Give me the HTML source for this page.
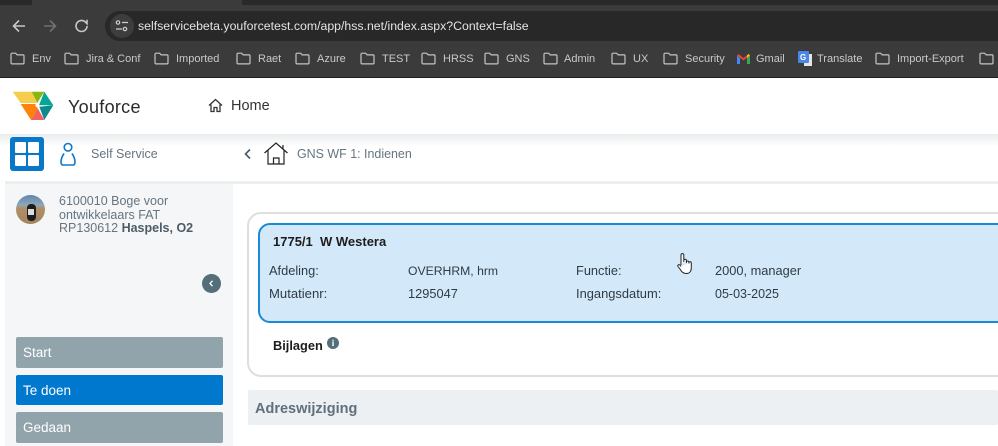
<!DOCTYPE html>
<html><head><meta charset="utf-8"><style>
html,body{margin:0;padding:0;background:#fff}
#p{position:relative;width:998px;height:446px;overflow:hidden;background:#fff;font-family:"Liberation Sans",sans-serif}
#p div,#p svg,#p span.t{position:absolute}
.t{white-space:nowrap;line-height:16px}
.b{font-size:11px;color:#c9c9c9;top:51px}
.f{top:52px;width:15px;height:13px}
.l{font-size:12.800px;color:#2f3b44}
.nav{left:16px;width:207px;height:31px;border-radius:2px;background:#91a3ab;color:#fff;font-size:13.500px;line-height:31px;text-indent:7px}
</style></head><body><div id="p">
<svg width="0" height="0"><defs><symbol id="fo" viewBox="0 0 15 13"><path d="M1 2.200a1 1 0 0 1 1-1h3.600l1.600 1.700H13a1 1 0 0 1 1 1v7a1 1 0 0 1-1 1H2a1 1 0 0 1-1-1z" fill="none" stroke="#c4c4c4" stroke-width="1.200"/></symbol></defs></svg>

<div style="left:0;top:0;width:998px;height:78px;background:#3b3b3b"></div>
<div style="left:0;top:0;width:998px;height:5px;background:#292929"></div>
<div style="left:32px;top:0;width:210px;height:5px;background:#3b3b3b"></div>
<div style="left:105px;top:11px;width:893px;height:30px;background:#282828;border-radius:15px 0 0 15px"></div>
<div style="left:110px;top:14px;width:24px;height:24px;border-radius:12px;background:#3d3d3d"></div>
<div style="left:0;top:77px;width:998px;height:1px;background:#1f1f1f"></div>

<svg style="left:10px;top:16px" width="18" height="20" viewBox="0 0 18 20"><path d="M15 10H3.500M9 4.500 3.500 10 9 15.500" fill="none" stroke="#c7c7c7" stroke-width="1.600"/></svg>
<svg style="left:41px;top:16px" width="18" height="20" viewBox="0 0 18 20"><path d="M3 10h11.500M9 4.500l5.500 5.500L9 15.500" fill="none" stroke="#707070" stroke-width="1.600"/></svg>
<svg style="left:73px;top:16px" width="18" height="20" viewBox="0 0 18 20"><path d="M14 10a5.500 5.500 0 1 1-1.600-3.900L14 7.700V3.800" fill="none" stroke="#c7c7c7" stroke-width="1.600"/></svg>
<svg style="left:114px;top:19px" width="16" height="14" viewBox="0 0 16 14"><g fill="none" stroke="#d0d0d0" stroke-width="1.200"><circle cx="4" cy="3.500" r="1.700"/><circle cx="11" cy="10" r="1.700"/><path d="M8 3.500h6M2 10h6"/></g></svg>
<span class="t" style="left:138px;top:18px;font-size:12.300px;color:#e3e3e3">selfservicebeta.youforcetest.com/app/hss.net/index.aspx?Context=false</span>

<svg class="f" style="left:10px" ><use href="#fo"/></svg><span class="t b" style="left:32px">Env</span>
<svg class="f" style="left:64px"><use href="#fo"/></svg><span class="t b" style="left:86px">Jira &amp; Conf</span>
<svg class="f" style="left:154px"><use href="#fo"/></svg><span class="t b" style="left:176px">Imported</span>
<svg class="f" style="left:236px"><use href="#fo"/></svg><span class="t b" style="left:258px">Raet</span>
<svg class="f" style="left:295px"><use href="#fo"/></svg><span class="t b" style="left:317px">Azure</span>
<svg class="f" style="left:360px"><use href="#fo"/></svg><span class="t b" style="left:382px">TEST</span>
<svg class="f" style="left:421px"><use href="#fo"/></svg><span class="t b" style="left:443px">HRSS</span>
<svg class="f" style="left:484px"><use href="#fo"/></svg><span class="t b" style="left:506px">GNS</span>
<svg class="f" style="left:543px"><use href="#fo"/></svg><span class="t b" style="left:564px">Admin</span>
<svg class="f" style="left:611px"><use href="#fo"/></svg><span class="t b" style="left:633px">UX</span>
<svg class="f" style="left:663px"><use href="#fo"/></svg><span class="t b" style="left:685px">Security</span>
<svg style="left:737px;top:54px" width="13" height="10" viewBox="0 0 13 10"><path d="M0 1.500V10h3V4z" fill="#4285f4"/><path d="M13 1.500V10h-3V4z" fill="#34a853"/><path d="M0 1.500 1.500 0l5 4 5-4L13 1.500 6.500 6.500z" fill="#ea4335"/><path d="M11.500 0 13 1.500 10 4V1.200z" fill="#fbbc04"/></svg>
<span class="t b" style="left:756px">Gmail</span>
<div style="left:804px;top:54px;width:8px;height:12px;background:#e4e4e4"></div>
<div style="left:798px;top:51px;width:11px;height:12px;background:#4a86e8;border-radius:1px"></div>
<span class="t" style="left:800px;top:50px;font-size:8px;color:#fff;font-weight:bold">G</span>
<span class="t b" style="left:817px">Translate</span>
<svg class="f" style="left:875px"><use href="#fo"/></svg><span class="t b" style="left:897px">Import-Export</span>
<svg class="f" style="left:979px"><use href="#fo"/></svg>

<svg style="left:12px;top:91px" width="42" height="30" viewBox="0 0 42 30"><path d="M.7.700H19.700L25.500 12H8.700z" fill="#f6cd4c"/><path d="M19.700.700H32.300L25.300 11.700z" fill="#8db510"/><path d="M32.300.700 41.300 14.300H27z" fill="#05a598"/><path d="M41.300 14.300 32.300 29 27.300 15.700z" fill="#0d8a8c"/><path d="M32.300 29H19L25.700 17.300z" fill="#f2625a"/><path d="M19 29 8.700 13H23.700L25.700 17.300z" fill="#ff8209"/><circle cx="25.300" cy="14.300" r="1.900" fill="#fff"/></svg>
<span class="t" style="left:68px;top:97px;font-size:18px;line-height:20px;color:#2b2b2b;letter-spacing:.3px">Youforce</span>
<svg style="left:208px;top:98px" width="15" height="15" viewBox="0 0 15 15"><path d="M1 7.500 7.500 1.500 14 7.500M3 6.500V13.500H6V9.500H9V13.500H12V6.500" fill="none" stroke="#333" stroke-width="1.300"/></svg>
<span class="t" style="left:231px;top:98px;font-size:14.500px;color:#333">Home</span>

<div style="left:0;top:134px;width:998px;height:12px;background:linear-gradient(#e9ebed,#fff)"></div>
<div style="left:10px;top:137px;width:34px;height:34px;border-radius:3px;background:#0a78c9"></div>
<div style="left:15px;top:142px;width:11px;height:11px;background:#fff;border-radius:1px"></div>
<div style="left:28px;top:142px;width:11px;height:11px;background:#fff;border-radius:1px"></div>
<div style="left:15px;top:155px;width:11px;height:11px;background:#fff;border-radius:1px"></div>
<div style="left:28px;top:155px;width:11px;height:11px;background:#fff;border-radius:1px"></div>
<svg style="left:59px;top:142px" width="18" height="25" viewBox="0 0 18 25"><g fill="none" stroke="#1078c8" stroke-width="1.600"><circle cx="9" cy="5.300" r="3.800"/><path d="M5 11.500Q2 16 2 20q0 3 2 3H14q2 0 2-3Q16 16 13 11.500"/></g></svg>
<span class="t" style="left:91px;top:146px;font-size:12.500px;color:#66757f">Self Service</span>
<svg style="left:243px;top:148px" width="10" height="12" viewBox="0 0 10 12"><path d="M7 1.500 2.500 6 7 10.500" fill="none" stroke="#4a5a64" stroke-width="1.600"/></svg>
<svg style="left:264px;top:142px" width="24" height="24" viewBox="0 0 24 24"><g fill="none" stroke="#222" stroke-width="1.200"><path d="M.5 11 12 1 23.500 11M4 8V22H20V8M9.500 22V16H15V22M19 6.500V3"/></g></svg>
<span class="t" style="left:297px;top:146px;font-size:12.450px;color:#66757f">GNS WF 1: Indienen</span>

<div style="left:5px;top:181px;width:993px;height:3px;background:#eceef0"></div>
<div style="left:5px;top:184px;width:228px;height:262px;background:#f4f6f8"></div>
<div style="left:16px;top:195px;width:29px;height:29px;border-radius:50%;overflow:hidden;background:linear-gradient(#5f86ad 0,#8fa7bb 35%,#b08f68 45%,#a5835e 100%)"><div style="left:11px;top:9px;width:9px;height:17px;background:#1d1d1d;border-radius:4px"></div><div style="left:12px;top:14px;width:6px;height:6px;background:#ddd"></div></div>
<span class="t" style="left:59px;top:195px;font-size:12.500px;line-height:13.500px;color:#66757f;white-space:normal;width:160px">6100010 Boge voor<br>ontwikkelaars FAT<br>RP130612 <b style="color:#4d5c66">Haspels, O2</b></span>
<div style="left:202px;top:274px;width:19px;height:19px;border-radius:50%;background:#546e7a"></div>
<svg style="left:207px;top:279px" width="9" height="9" viewBox="0 0 9 9"><path d="M5.500 1.800 3 4.500 5.500 7.200" fill="none" stroke="#fff" stroke-width="1.300"/></svg>

<div class="nav" style="top:337px">Start</div>
<div class="nav" style="top:375px;height:30px;background:#0078cd">Te doen</div>
<div class="nav" style="top:412px">Gedaan</div>

<div style="left:247px;top:212px;width:800px;height:161px;border:2px solid #dedede;border-radius:14px;box-sizing:content-box"></div>
<div style="left:258px;top:223px;width:800px;height:96px;border:2px solid #1a8ad8;border-radius:12px;background:#d3e9fa"></div>
<span class="t" style="left:273px;top:234px;font-size:13px;font-weight:bold;color:#1c1c1c">1775/1&nbsp; W Westera</span>
<span class="t l" style="left:269px;top:263px">Afdeling:</span>
<span class="t l" style="left:408px;top:263px;font-size:12.200px">OVERHRM, hrm</span>
<span class="t l" style="left:576px;top:263px">Functie:</span>
<span class="t l" style="left:715px;top:263px">2000, manager</span>
<span class="t l" style="left:269px;top:286px;font-size:13.100px">Mutatienr:</span>
<span class="t l" style="left:408px;top:286px">1295047</span>
<span class="t l" style="left:576px;top:286px;font-size:12.900px">Ingangsdatum:</span>
<span class="t l" style="left:715px;top:286px;font-size:12.500px">05-03-2025</span>
<svg style="left:676px;top:252px" width="18" height="24" viewBox="0 0 18 24"><path d="M5 13V3a1.400 1.400 0 0 1 2.800 0V10M7.800 10V8.500a1.300 1.300 0 0 1 2.600 0V11M10.400 10a1.300 1.300 0 0 1 2.500 0v1.500M12.900 11a1.200 1.200 0 0 1 2.400 0v5c0 3.500-2 5.500-5 5.500-3 0-4.500-1.200-6-4L2 14.500c-.8-1.500 1-2.500 2-1.300L5 14.500" fill="#fff" stroke="#222" stroke-width="1"/></svg>

<span class="t" style="left:273px;top:338px;font-size:12.800px;font-weight:bold;color:#1c1c1c">Bijlagen</span>
<div style="left:327px;top:337px;width:12px;height:12px;border-radius:50%;background:#546e7a;color:#fff;font:bold 9px/12px 'Liberation Serif',serif;text-align:center">i</div>

<div style="left:248px;top:390px;width:750px;height:35px;background:#edf0f2;border-radius:2px"></div>
<span class="t" style="left:255px;top:401px;font-size:14.500px;font-weight:bold;color:#5f707b">Adreswijziging</span>
</div></body></html>
